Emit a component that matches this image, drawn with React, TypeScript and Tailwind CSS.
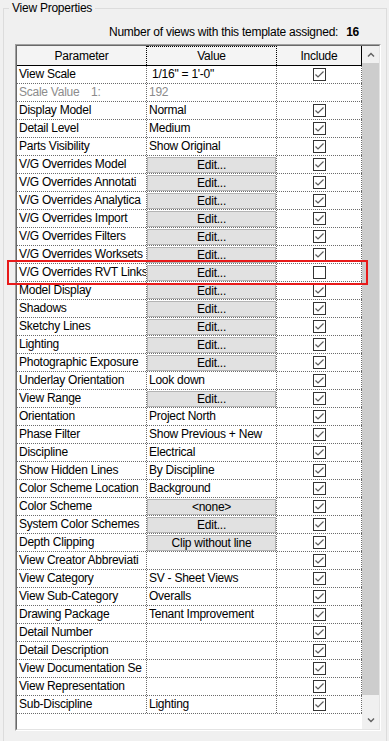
import React from 'react';

type Row = {
  name: string;
  value?: string;
  button?: string;
  checked?: boolean | null;
  muted?: boolean;
};

const rows: Row[] = [
  { name: 'View Scale', value: '\u00a01/16" = 1\'-0"', checked: true },
  { name: 'Scale Value', value: '192', checked: null, muted: true },
  { name: 'Display Model', value: 'Normal', checked: true },
  { name: 'Detail Level', value: 'Medium', checked: true },
  { name: 'Parts Visibility', value: 'Show Original', checked: true },
  { name: 'V/G Overrides Model', button: 'Edit...', checked: true },
  { name: 'V/G Overrides Annotati', button: 'Edit...', checked: true },
  { name: 'V/G Overrides Analytica', button: 'Edit...', checked: true },
  { name: 'V/G Overrides Import', button: 'Edit...', checked: true },
  { name: 'V/G Overrides Filters', button: 'Edit...', checked: true },
  { name: 'V/G Overrides Worksets', button: 'Edit...', checked: true },
  { name: 'V/G Overrides RVT Links', button: 'Edit...', checked: false },
  { name: 'Model Display', button: 'Edit...', checked: true },
  { name: 'Shadows', button: 'Edit...', checked: true },
  { name: 'Sketchy Lines', button: 'Edit...', checked: true },
  { name: 'Lighting', button: 'Edit...', checked: true },
  { name: 'Photographic Exposure', button: 'Edit...', checked: true },
  { name: 'Underlay Orientation', value: 'Look down', checked: true },
  { name: 'View Range', button: 'Edit...', checked: true },
  { name: 'Orientation', value: 'Project North', checked: true },
  { name: 'Phase Filter', value: 'Show Previous + New', checked: true },
  { name: 'Discipline', value: 'Electrical', checked: true },
  { name: 'Show Hidden Lines', value: 'By Discipline', checked: true },
  { name: 'Color Scheme Location', value: 'Background', checked: true },
  { name: 'Color Scheme', button: '<none>', checked: true },
  { name: 'System Color Schemes', button: 'Edit...', checked: true },
  { name: 'Depth Clipping', button: 'Clip without line', checked: true },
  { name: 'View Creator Abbreviati', value: '', checked: true },
  { name: 'View Category', value: 'SV - Sheet Views', checked: true },
  { name: 'View Sub-Category', value: 'Overalls', checked: true },
  { name: 'Drawing Package', value: 'Tenant Improvement', checked: true },
  { name: 'Detail Number', value: '', checked: true },
  { name: 'Detail Description', value: '', checked: true },
  { name: 'View Documentation Se', value: '', checked: true },
  { name: 'View Representation', value: '', checked: true },
  { name: 'Sub-Discipline', value: 'Lighting', checked: true },
];

function CheckBox({ checked }: { checked: boolean }) {
  return (
    <div className="w-[13px] h-[13px] border border-[#333333] bg-white">
      {checked && (
        <svg width="11" height="11" viewBox="0 0 11 11">
          <polyline points="1.5,5.5 4,8 9.5,2.5" fill="none" stroke="#5a5a5a" strokeWidth="1.2" />
        </svg>
      )}
    </div>
  );
}

function Chevron({ up }: { up?: boolean }) {
  return (
    <svg width="8" height="5" viewBox="0 0 8 5">
      <polyline
        points={up ? '1,4.5 4,1.5 7,4.5' : '1,0.5 4,3.5 7,0.5'}
        fill="none"
        stroke="#606060"
        strokeWidth="1.4"
      />
    </svg>
  );
}

export default function App() {
  return (
    <div className="relative w-[389px] h-[741px] overflow-hidden bg-[#f0f0f0] text-[12px] tracking-[-0.25px] text-black font-['Liberation_Sans',Arial,sans-serif]">
      {/* group box */}
      <div className="ml-[3px] mr-[2px] mt-[8px] h-[800px] border border-[#dcdcdc] pt-[16px]">
        <div className="flex justify-end pr-[27px] h-[14px] leading-[14px]">
          <span>Number of views with this template assigned:</span>
          <span className="ml-[8px] font-bold">16</span>
        </div>

        <div className="ml-[11px] mt-[5px] w-[366px] h-[687px] border border-t-[#a0a0a0] border-l-[#a0a0a0] border-r-white border-b-white">
          <div className="flex h-full border border-t-[#696969] border-l-[#696969] border-r-[#e3e3e3] border-b-[#e3e3e3]">
            <div className="w-[345px] flex flex-col bg-white">
              {/* header */}
              <div className="flex h-[20px] shrink-0 border-b border-black bg-[#f4f4f4]">
                <div className="w-[130px] flex items-center justify-center border-r border-dotted border-black">
                  Parameter
                </div>
                <div className="w-[130px] flex items-center justify-center border-r border-t border-dotted border-black">
                  Value
                </div>
                <div className="w-[85px] flex items-center justify-center border-r border-black">
                  Include
                </div>
              </div>

              {rows.map((r) => (
                <div key={r.name} className="flex h-[18px] shrink-0 border-b border-dotted border-[#6b6b6b] leading-[17px]">
                  <div
                    className={`w-[130px] pl-[2px] whitespace-nowrap overflow-hidden border-r border-dotted border-[#6b6b6b] flex ${
                      r.muted ? 'text-[#8c8c8c]' : ''
                    }`}
                  >
                    {r.muted ? (
                      <>
                        <span className="w-[72px]">{r.name}</span>
                        <span>1:</span>
                      </>
                    ) : (
                      r.name
                    )}
                  </div>
                  <div
                    className={`w-[130px] whitespace-nowrap overflow-hidden border-r border-dotted border-[#6b6b6b] ${
                      r.button ? '' : 'pl-[2px]'
                    } ${r.muted ? 'text-[#8c8c8c]' : ''}`}
                  >
                    {r.button ? (
                      <div className="mt-[1px] h-[16px] flex items-center justify-center bg-[#e1e1e1] border border-[#b4b4b4] leading-[14px]">
                        {r.button}
                      </div>
                    ) : (
                      r.value
                    )}
                  </div>
                  <div className="w-[85px] flex items-center justify-center border-r border-dotted border-[#6b6b6b]">
                    {r.checked !== null && r.checked !== undefined && <CheckBox checked={r.checked} />}
                  </div>
                </div>
              ))}
            </div>

            {/* scrollbar */}
            <div className="w-[17px] flex flex-col bg-[#f0f0f0]">
              <div className="h-[17px] flex items-center justify-center">
                <Chevron up />
              </div>
              <div className="h-[632px] bg-[#cdcdcd]" />
              <div className="flex-1" />
              <div className="h-[17px] flex items-center justify-center">
                <Chevron />
              </div>
            </div>
          </div>
        </div>
      </div>

      {/* legend over the group box border */}
      <div className="absolute left-[9px] top-[1px] px-[3px] leading-[14px] bg-[#f0f0f0]">View Properties</div>

      {/* red highlight */}
      <div className="absolute left-[7px] top-[260px] w-[361px] h-[25px] border-2 border-[#e81a1a]" />
    </div>
  );
}
